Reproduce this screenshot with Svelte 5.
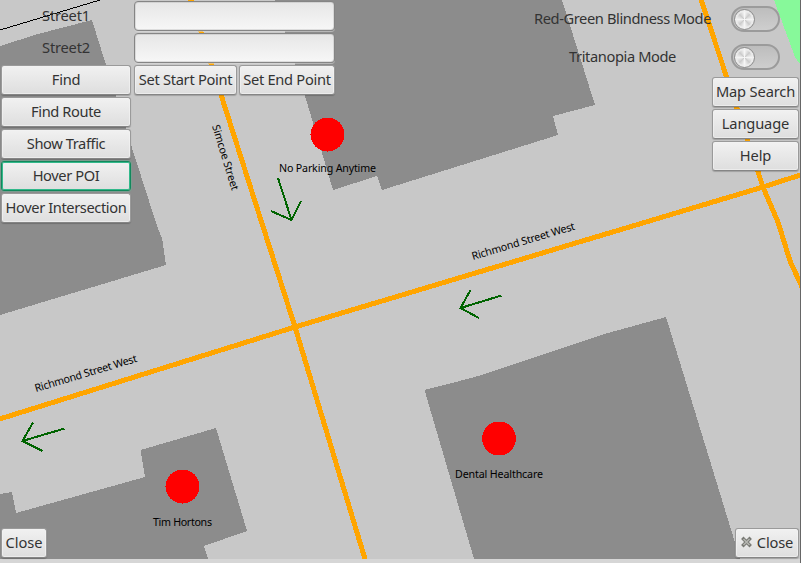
<script>
  const buildings = [
    '0,46 38,34 92,20 106,65 132,148 158,229 162,238 166,265 0,315',
    '275,0 305,96 333,190 377,176 382,190 558,135 553,116 595,105 562,0',
    '424.5,390 475,377 608,333 666,317 722,500 740,559 474,559',
    '0,494 12,492 16,513 145,477 140.5,450 216,428 247,531 204,546 208,559 0,559'
  ];
  const roads = [
    '190.5,-1 295,327 365,559',
    '-2,419.5 295,327 763,187 802,174.5',
    '700.5,-2 763,187 778,222 790,261 802,287'
  ];
  const arrows = [
    'M278 178L291.5 220M271 211L291.5 220L301 201',
    'M501.5 295.5L460.5 308M470.5 290L460.5 308L479 318',
    'M64.5 428.5L22.5 441M33 422.5L22.5 441L42.5 451'
  ];
  const places = [
    { x: 327, y: 134, w: 97, dy: 38, name: 'No Parking Anytime' },
    { x: 498.5, y: 438, w: 88, dy: 40, name: 'Dental Healthcare' },
    { x: 182, y: 486, w: 59, dy: 40, name: 'Tim Hortons' }
  ];
  const streets = [
    { x: 212, y: 126, a: 73, w: 68, name: 'Simcoe Street' },
    { x: 473, y: 260, a: -16.6, w: 107, name: 'Richmond Street West' },
    { x: 36, y: 392, a: -16.6, w: 106, name: 'Richmond Street West' }
  ];
  const actions = ['Find Route', 'Show Traffic', 'Hover POI', 'Hover Intersection'];
  let active = $state('Hover POI');
  let modes = $state([
    { name: 'Red-Green Blindness Mode', on: false },
    { name: 'Tritanopia Mode', on: false }
  ]);
</script>

<main>
  <svg class="map" width="800" height="559" viewBox="0 0 800 559">
    <g shape-rendering="crispEdges">
      <rect width="800" height="559" fill="#c8c8c8" />
      {#each buildings as points}<polygon {points} fill="#8c8c8c" />{/each}
      <polygon points="774,0 795,57 800,64 800,0" fill="#87f99a" />
      <path d="M0 30L100 0" stroke="#000" />
      {#each roads as points}<polyline {points} fill="none" stroke="#ffa500" stroke-width="5" />{/each}
      {#each arrows as d}<path {d} fill="none" stroke="#006400" stroke-width="2" />{/each}
      {#each places as p}<circle cx={p.x + 0.5} cy={p.y + 0.5} r="17" fill="red" />{/each}
    </g>
    {#each places as p}
      <text x={p.x + 0.5 - p.w / 2} y={p.y + p.dy} textLength={p.w}>{p.name}</text>
    {/each}
    {#each streets as s}
      <text transform="translate({s.x} {s.y}) rotate({s.a})" textLength={s.w}>{s.name}</text>
    {/each}
  </svg>

  <div class="overlay">
    <div class="top">
      <div class="search">
        <label for="s1">Street1</label>
        <input id="s1" />
        <label for="s2">Street2</label>
        <input id="s2" />
        <button>Find</button>
        <div class="points">
          <button class="start">Set Start Point</button>
          <button class="end">Set End Point</button>
        </div>
        {#each actions as a}
          <button class="action" class:active={active === a} onclick={() => (active = a)}>{a}</button>
        {/each}
      </div>
      <div class="side">
        {#each modes as m}
          <div class="mode">
            <span>{m.name}</span>
            <button class="switch" class:on={m.on} aria-label={m.name} onclick={() => (m.on = !m.on)}>
              <i></i>
            </button>
          </div>
        {/each}
        <div class="menu">
          <button>Map Search</button>
          <button>Language</button>
          <button>Help</button>
        </div>
      </div>
    </div>
    <div class="bottom">
      <button class="close">Close</button>
      <button class="close icon">
        <svg width="11" height="12" viewBox="0 0 11 12">
          <path d="M2.5 3L8.5 9M8.5 3L2.5 9" stroke="#777873" stroke-width="3.4" stroke-linecap="square" />
          <path d="M2.5 3L8.5 9M8.5 3L2.5 9" stroke="#b4b5b0" stroke-width="1.5" />
        </svg>
        Close
      </button>
    </div>
  </div>
</main>

<style>
  :global(body) { overflow: hidden; background: #d6d6d6; }
  main {
    position: relative;
    width: 801px;
    height: 563px;
    box-sizing: border-box;
    background: #d6d6d6;
    font: 14.67px/20px "Noto Sans", sans-serif;
    color: #333;
    border-right: 1px solid #666;
  }
  .map { display: block; }
  .map text { font-size: 10.67px; fill: #000; }
  .overlay {
    position: absolute;
    inset: 0 -1px 0 0;
    display: flex;
    flex-direction: column;
    justify-content: space-between;
  }
  .top, .bottom { display: flex; justify-content: space-between; }
  .search {
    display: grid;
    grid-template-columns: 130px 201px;
    grid-auto-rows: 30px;
    gap: 2px 3px;
    padding: 1px;
  }
  .search label { text-align: center; line-height: 28px; letter-spacing: -0.2px; }
  button {
    display: flex;
    align-items: center;
    justify-content: center;
    height: 30px;
    padding: 0 0 3px;
    box-sizing: border-box;
    border: 1px solid #9a9a9a;
    border-bottom-color: #858585;
    border-radius: 3px;
    background: linear-gradient(#f1f1f1, #dedede);
    box-shadow: inset 0 0 0 1px #f3f3f3aa, 0 1px 1px #0003;
    font: inherit;
    color: #333;
    letter-spacing: -0.15px;
    white-space: nowrap;
  }
  .search button { letter-spacing: -0.3px; }
  .search .action { grid-column: 1; letter-spacing: -0.4px; }
  button.active { border-color: #12885c; box-shadow: inset 0 0 0 1px #32b98b, 0 0 0 1px #6fa89288; }
  input {
    width: 201px;
    height: 30px;
    box-sizing: border-box;
    border: 1px solid #858585;
    border-radius: 4px;
    background: linear-gradient(#e6e6e6, #f7f7f7);
    box-shadow: inset 0 0 0 1px #aaa5, 0 1px 0 #ddd8;
    font: inherit;
    outline: none;
  }
  .points { display: flex; gap: 2px; }
  .start { width: 103px; }
  .end { width: 96px; }
  .side { display: flex; flex-direction: column; width: 270px; padding-right: 2px; }
  .mode { display: flex; align-items: center; justify-content: flex-end; gap: 18px; height: 38px; padding-right: 19px; }
  .mode span { width: 181px; padding-bottom: 3px; text-align: center; letter-spacing: -0.4px; white-space: nowrap; }
  .switch {
    justify-content: flex-start;
    width: 49px;
    height: 26px;
    padding: 0 0 0 1px;
    border: 2px solid #9b9b9b;
    border-radius: 13px;
    background: linear-gradient(#bdbdbd, #cecece);
    box-shadow: none;
  }
  .switch.on { justify-content: flex-end; }
  .switch i {
    width: 21px;
    height: 21px;
    box-sizing: border-box;
    border: 1px solid #8c8c8c;
    border-radius: 50%;
    background: conic-gradient(#f6f6f6, #ccc 45deg, #f4f4f4 90deg, #ccc 135deg, #f6f6f6 180deg, #ccc 225deg, #f4f4f4 270deg, #ccc 315deg, #f6f6f6);
    box-shadow: inset 0 0 0 2px #eeeb;
  }
  .menu { display: flex; flex-direction: column; gap: 2px; width: 87px; margin: 1px 0 0 auto; }
  .bottom { padding: 0 2px 5px 1px; }
  .close { width: 46px; letter-spacing: 0; }
  .close.icon { width: 64px; gap: 5px; letter-spacing: -0.15px; }
</style>
